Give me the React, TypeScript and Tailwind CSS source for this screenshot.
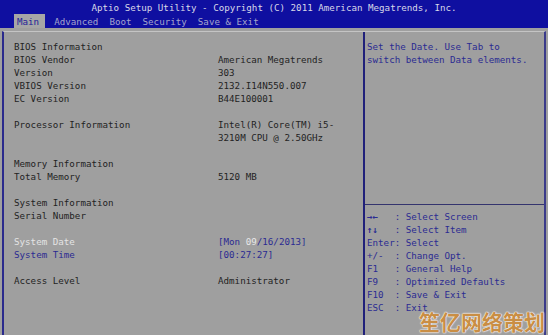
const mono = '[font-family:"DejaVu_Sans_Mono","Liberation_Mono",monospace]';

type Row = { label?: string; value?: string; kind?: 'date' | 'time' };

const rows: Row[] = [
  { label: 'BIOS Information' },
  { label: 'BIOS Vendor', value: 'American Megatrends' },
  { label: 'Version', value: '303' },
  { label: 'VBIOS Version', value: '2132.I14N550.007' },
  { label: 'EC Version', value: 'B44E100001' },
  {},
  { label: 'Processor Information', value: 'Intel(R) Core(TM) i5-' },
  { value: '3210M CPU @ 2.50GHz' },
  {},
  { label: 'Memory Information' },
  { label: 'Total Memory', value: '5120 MB' },
  {},
  { label: 'System Information' },
  { label: 'Serial Number' },
  {},
  { label: 'System Date', kind: 'date' },
  { label: 'System Time', kind: 'time' },
  {},
  { label: 'Access Level', value: 'Administrator' },
];

const keys = [
  ['→←', 'Select Screen'],
  ['↑↓', 'Select Item'],
  ['Enter', 'Select'],
  ['+/-', 'Change Opt.'],
  ['F1', 'General Help'],
  ['F9', 'Optimized Defaults'],
  ['F10', 'Save & Exit'],
  ['ESC', 'Exit'],
];

const tabs = ['Main', 'Advanced', 'Boot', 'Security', 'Save & Exit'];

function InfoRow({ row }: { row: Row }) {
  let labelColor = 'text-[#232323]';
  if (row.kind === 'date') labelColor = 'text-[#e4e4e4]';
  if (row.kind === 'time') labelColor = 'text-[#2b2b92]';

  return (
    <div className="flex h-[13px] items-center whitespace-pre">
      <div className={`w-[204px] ${labelColor}`}>{row.label ?? ''}</div>
      <div className="text-[#232323]">
        {row.kind === 'date' && (
          <span className="text-[#2b2b92]">
            [Mon <span className="text-[#e8e8e8]">09</span>/16/2013]
          </span>
        )}
        {row.kind === 'time' && <span className="text-[#2b2b92]">[00:27:27]</span>}
        {!row.kind && (row.value ?? '')}
      </div>
    </div>
  );
}

export default function App() {
  return (
    <div className={`relative w-[548px] h-[335px] overflow-hidden bg-[#9f9f9f] text-[9.2px] leading-[13px] ${mono}`}>
      {/* header */}
      <div className="h-[28px] bg-[#0f0fa0] flex flex-col">
        <div className="h-[14px] flex items-center justify-center text-[#d8d8e8] whitespace-pre">
          Aptio Setup Utility - Copyright (C) 2011 American Megatrends, Inc.
        </div>
        <div className="flex items-stretch h-[14px] pl-[14px] whitespace-pre">
          {tabs.map((t, i) => (
            <div
              key={t}
              className={
                i === 0
                  ? 'bg-[#a6a6a6] text-[#1f1f98] pl-[3px] pr-[6px] mr-[6px] flex items-center'
                  : 'text-[#a4a4cc] px-[3px] mr-[5px] flex items-center'
              }
            >
              {t}
            </div>
          ))}
        </div>
      </div>

      {/* body */}
      <div className="h-[307px] pl-[2px] pr-[2px] pt-[3px]">
        <div className="h-full flex border-t border-t-[#c4c4c4] border-l-2 border-l-[#2a2a8c] border-r-2 border-r-[#3a3a8a]">
          <div className="w-[359px] pl-[10px] pt-[8px]">
            {rows.map((r, i) => (
              <InfoRow key={i} row={r} />
            ))}
          </div>
          <div className="w-[2px] bg-[#20207a]" />
          <div className="flex-1 flex flex-col">
            <div className="h-[172px] pl-[2px] pt-[8px] text-[#2b2b92]">
              <div>Set the Date. Use Tab to</div>
              <div>switch between Data elements.</div>
            </div>
            <div className="h-px bg-[#34346e]" />
            <div className="pl-[2px] pt-[5px] text-[#2b2b92] whitespace-pre">
              {keys.map(([k, d]) => (
                <div key={k} className="h-[13px] flex items-center">
                  <span className={k === '→←' || k === '↑↓' ? 'font-bold' : ''}>
                    {k.padEnd(5, ' ')}
                  </span>
                  <span>: {d}</span>
                </div>
              ))}
            </div>
          </div>
        </div>
      </div>

      {/* watermark */}
      <div className="absolute right-[3px] bottom-[3px] text-[21px] leading-none font-bold text-[#c98e45] [font-family:'Noto_Sans_CJK_SC',sans-serif] [text-shadow:0_0_2px_#fff,0_0_1px_#fff,0_0_1px_#fff]">
        笙亿网络策划
      </div>
    </div>
  );
}
